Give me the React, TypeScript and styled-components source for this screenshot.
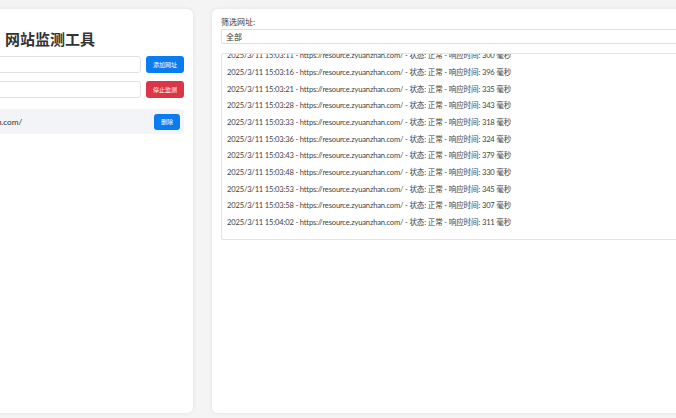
import React, { useLayoutEffect, useRef, useState } from "react";
import styled, { createGlobalStyle } from "styled-components";

const GlobalStyle = createGlobalStyle`
  html, body {
    margin: 0;
    padding: 0;
    overflow: hidden;
    background: #f4f4f4;
  }
  body {
    font-family: Lato, "Noto Sans CJK SC", sans-serif;
    color: #333;
  }
`;

const Page = styled.main`
  display: flex;
  gap: 19px;
  box-sizing: border-box;
  width: 1100px;
  height: 418px;
  margin-left: -120px;
  padding: 9px 9px 5px;
`;

const Card = styled.section<{ $width?: number }>`
  flex: ${(p) => (p.$width ? `0 0 ${p.$width}px` : "1 1 auto")};
  box-sizing: border-box;
  padding: 9px;
  background: #fff;
  border-radius: 6px;
  box-shadow: 0 0 4px rgba(0, 0, 0, 0.08);
  display: flex;
  flex-direction: column;
`;

const Title = styled.h1`
  margin: 12px 0 8px;
  padding-left: 18px;
  font-size: 15px;
  line-height: 18px;
  font-weight: 700;
  text-align: center;
  color: #333;
`;

const Row = styled.div`
  display: flex;
  gap: 5px;
  margin-bottom: 8px;
`;

const TextInput = styled.input`
  flex: 1;
  box-sizing: border-box;
  height: 17px;
  padding: 0 5px;
  border: 1px solid #e2e2e2;
  border-radius: 3px;
  font: inherit;
  font-size: 8px;
  outline: none;
`;

const Button = styled.button<{ $tone?: "primary" | "danger" }>`
  flex: none;
  box-sizing: border-box;
  height: 17px;
  width: 38px;
  padding: 0;
  border: none;
  border-radius: 3px;
  background: ${(p) => (p.$tone === "danger" ? "#dc3545" : "#0a7cf0")};
  color: #fff;
  font-family: inherit;
  font-size: 6px;
  cursor: pointer;
`;

const SmallButton = styled(Button)`
  width: 26px;
  height: 16px;
`;

const UrlList = styled.ul`
  list-style: none;
  margin: 3px 0 0;
  padding: 0;
`;

const UrlItem = styled.li`
  display: flex;
  align-items: center;
  justify-content: space-between;
  box-sizing: border-box;
  height: 25px;
  padding: 0 4px 0 8px;
  background: #f3f4f7;
  border-radius: 3px;
  font-size: 8.3px;
  letter-spacing: -0.1px;
`;

const Label = styled.label`
  display: block;
  font-size: 8px;
  line-height: 9px;
  margin-bottom: 2px;
`;

const Select = styled.select`
  box-sizing: border-box;
  width: 100%;
  height: 15px;
  padding: 0 4px;
  border: 1px solid #e0e0e0;
  border-radius: 2px;
  background: #fff;
  font-family: inherit;
  font-size: 8px;
  color: #333;
  appearance: none;
  outline: none;
`;

const LogBox = styled.div`
  box-sizing: border-box;
  height: 187px;
  margin-top: 9px;
  padding: 5px 5px 8px;
  border: 1px solid #e3e3e3;
  border-radius: 2px;
  overflow-y: auto;
`;

const LogLine = styled.div`
  padding: 4px 0;
  font-size: 7.6px;
  letter-spacing: -0.18px;
  line-height: 8.7px;
  color: #444;
  white-space: nowrap;
`;

const SITE = "https://resource.zyuanzhan.com/";

const logs: [string, number][] = [
  ["15:02:56", 322],
  ["15:03:01", 318],
  ["15:03:06", 341],
  ["15:03:11", 300],
  ["15:03:16", 396],
  ["15:03:21", 335],
  ["15:03:28", 343],
  ["15:03:33", 318],
  ["15:03:36", 324],
  ["15:03:43", 379],
  ["15:03:48", 330],
  ["15:03:53", 345],
  ["15:03:58", 307],
  ["15:04:02", 311],
];

const App = () => {
  const [url, setUrl] = useState("");
  const [interval, setIntervalValue] = useState("");
  const logRef = useRef<HTMLDivElement>(null);

  useLayoutEffect(() => {
    if (logRef.current) logRef.current.scrollTop = logRef.current.scrollHeight;
  }, []);

  return (
    <>
      <GlobalStyle />
      <Page>
        <Card $width={304}>
          <Title>网站监测工具</Title>
          <Row>
            <TextInput value={url} onChange={(e) => setUrl(e.target.value)} />
            <Button>添加网址</Button>
          </Row>
          <Row>
            <TextInput
              value={interval}
              onChange={(e) => setIntervalValue(e.target.value)}
            />
            <Button $tone="danger">停止监测</Button>
          </Row>
          <UrlList>
            <UrlItem>
              <span>{SITE}</span>
              <SmallButton>删除</SmallButton>
            </UrlItem>
          </UrlList>
        </Card>
        <Card>
          <Label>筛选网址:</Label>
          <Select defaultValue="all">
            <option value="all">全部</option>
            <option value={SITE}>{SITE}</option>
          </Select>
          <LogBox ref={logRef}>
            {logs.map(([time, ms]) => (
              <LogLine key={time}>
                2025/3/11 {time} - {SITE} - 状态: 正常 - 响应时间: {ms} 毫秒
              </LogLine>
            ))}
          </LogBox>
        </Card>
      </Page>
    </>
  );
};

export default App;
